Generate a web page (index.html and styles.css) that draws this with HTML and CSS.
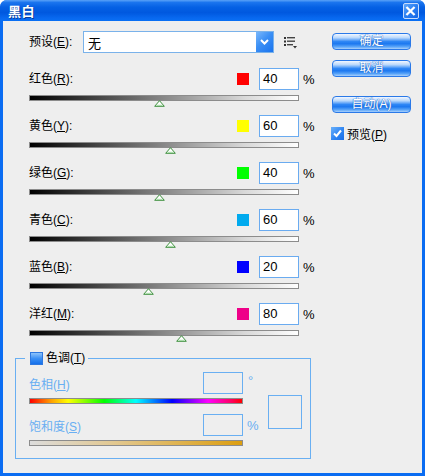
FILE: index.html
```html
<!DOCTYPE html>
<html>
<head>
<meta charset="utf-8">
<link rel="stylesheet" href="styles.css">
</head>
<body>
<div class="window">
  <div class="titlebar">
    <span class="title">黑白</span>
    <span class="close"><svg width="16" height="16" viewBox="0 0 16 16"><path d="M4.5 4.5 L11.5 11.5 M11.5 4.5 L4.5 11.5" stroke="#fff" stroke-width="2.4" stroke-linecap="square"/></svg></span>
  </div>
  <div class="client">
    <div class="main">
      <div class="preset-row">
        <span class="plabel">预设(<u>E</u>):</span>
        <div class="combo">
          <span class="combo-text">无</span>
          <span class="combo-btn"><svg width="17" height="20" viewBox="0 0 17 20"><path d="M5 8 L8.5 11.5 L12 8" stroke="#fff" stroke-width="2" fill="none"/></svg></span>
        </div>
        <svg class="menu-icon" width="14" height="12" viewBox="0 0 14 12">
          <rect x="0" y="0" width="2" height="2" fill="#333"/><rect x="3" y="0" width="8" height="1.4" fill="#444"/>
          <rect x="0" y="3.5" width="2" height="2" fill="#333"/><rect x="3" y="3.5" width="8" height="1.4" fill="#444"/>
          <rect x="0" y="7" width="2" height="2" fill="#333"/><rect x="3" y="7" width="6" height="1.4" fill="#444"/>
          <path d="M9 9 L13 9 L11 11.5 Z" fill="#333"/>
        </svg>
      </div>

      <div class="channel">
        <div class="ch-row"><span class="clabel">红色(<u>R</u>):</span><span class="swatch" style="background:#ff0000"></span><span class="num">40</span><span class="unit">%</span></div>
        <div class="slider"><span class="thumb" style="left:124px"><svg width="11" height="7" viewBox="0 0 11 7"><path d="M5.5 0.7 L10.3 6.3 L0.7 6.3 Z" fill="#fff" stroke="#3d8f3d" stroke-width="1"/><path d="M2.5 5.3 L8.5 5.3" stroke="#9fd89f" stroke-width="1"/></svg></span></div>
      </div>
      <div class="channel">
        <div class="ch-row"><span class="clabel">黄色(<u>Y</u>):</span><span class="swatch" style="background:#ffff00"></span><span class="num">60</span><span class="unit">%</span></div>
        <div class="slider"><span class="thumb" style="left:135px"><svg width="11" height="7" viewBox="0 0 11 7"><path d="M5.5 0.7 L10.3 6.3 L0.7 6.3 Z" fill="#fff" stroke="#3d8f3d" stroke-width="1"/><path d="M2.5 5.3 L8.5 5.3" stroke="#9fd89f" stroke-width="1"/></svg></span></div>
      </div>
      <div class="channel">
        <div class="ch-row"><span class="clabel">绿色(<u>G</u>):</span><span class="swatch" style="background:#00ff00"></span><span class="num">40</span><span class="unit">%</span></div>
        <div class="slider"><span class="thumb" style="left:124px"><svg width="11" height="7" viewBox="0 0 11 7"><path d="M5.5 0.7 L10.3 6.3 L0.7 6.3 Z" fill="#fff" stroke="#3d8f3d" stroke-width="1"/><path d="M2.5 5.3 L8.5 5.3" stroke="#9fd89f" stroke-width="1"/></svg></span></div>
      </div>
      <div class="channel">
        <div class="ch-row"><span class="clabel">青色(<u>C</u>):</span><span class="swatch" style="background:#00aaee"></span><span class="num">60</span><span class="unit">%</span></div>
        <div class="slider"><span class="thumb" style="left:135px"><svg width="11" height="7" viewBox="0 0 11 7"><path d="M5.5 0.7 L10.3 6.3 L0.7 6.3 Z" fill="#fff" stroke="#3d8f3d" stroke-width="1"/><path d="M2.5 5.3 L8.5 5.3" stroke="#9fd89f" stroke-width="1"/></svg></span></div>
      </div>
      <div class="channel">
        <div class="ch-row"><span class="clabel">蓝色(<u>B</u>):</span><span class="swatch" style="background:#0000ff"></span><span class="num">20</span><span class="unit">%</span></div>
        <div class="slider"><span class="thumb" style="left:113px"><svg width="11" height="7" viewBox="0 0 11 7"><path d="M5.5 0.7 L10.3 6.3 L0.7 6.3 Z" fill="#fff" stroke="#3d8f3d" stroke-width="1"/><path d="M2.5 5.3 L8.5 5.3" stroke="#9fd89f" stroke-width="1"/></svg></span></div>
      </div>
      <div class="channel">
        <div class="ch-row"><span class="clabel">洋红(<u>M</u>):</span><span class="swatch" style="background:#ee0088"></span><span class="num">80</span><span class="unit">%</span></div>
        <div class="slider"><span class="thumb" style="left:146px"><svg width="11" height="7" viewBox="0 0 11 7"><path d="M5.5 0.7 L10.3 6.3 L0.7 6.3 Z" fill="#fff" stroke="#3d8f3d" stroke-width="1"/><path d="M2.5 5.3 L8.5 5.3" stroke="#9fd89f" stroke-width="1"/></svg></span></div>
      </div>

      <fieldset class="tint">
        <legend class="tint-legend"><span class="tbox"></span><span>色调(<u>T</u>)</span></legend>
        <div class="tint-body">
          <div class="tint-left">
            <div class="t-row"><span class="tlabel">色相(<u>H</u>)</span><span class="tinput"></span><span class="tunit deg">°</span></div>
            <div class="hbar"></div>
            <div class="t-row second"><span class="tlabel">饱和度(<u>S</u>)</span><span class="tinput"></span><span class="tunit">%</span></div>
            <div class="sbar"></div>
          </div>
          <div class="tswatch"></div>
        </div>
      </fieldset>
    </div>

    <div class="side">
      <div class="btn">确定</div>
      <div class="btn b2">取消</div>
      <div class="btn b3">自动(A)</div>
      <div class="preview"><span class="cbox"><svg width="13" height="13" viewBox="0 0 13 13"><path d="M3 6.5 L5.5 9 L10 3.5" stroke="#fff" stroke-width="2" fill="none"/></svg></span><span>预览(<u>P</u>)</span></div>
    </div>
  </div>
</div>
</body>
</html>
```

FILE: styles.css
```css
* { box-sizing: border-box; }
html, body { margin: 0; padding: 0; background: #ffffff; }
body {
  font-family: "Liberation Sans", "Noto Sans CJK SC", sans-serif;
  font-size: 12px;
  color: #000;
}
u { text-decoration: underline; text-underline-offset: 1px; }

.window {
  width: 425px;
  height: 476px;
  background: #0a6cf2;
  border-radius: 7px 7px 0 0;
  display: flex;
  flex-direction: column;
  overflow: hidden;
}
.titlebar {
  height: 21px;
  flex: none;
  display: flex;
  align-items: center;
  justify-content: space-between;
  padding: 0 6px 0 8px;
  background: linear-gradient(to bottom, #5aa2f7 0%, #1a74ee 12%, #0560e4 35%, #0058df 60%, #0868ef 85%, #0a70f4 100%);
}
.title {
  color: #fff;
  font-weight: bold;
  font-size: 13px;
  font-family: "Noto Sans CJK SC", sans-serif;
  line-height: 20px;
  text-shadow: 1px 1px 0 #0a3c9a;
  letter-spacing: 0.5px;
}
.close {
  width: 16px;
  height: 16px;
  margin-top: 1px;
  border: 1px solid #c8dcfb;
  border-radius: 2px;
  background: linear-gradient(135deg, #5ea6fa 0%, #2b7ff2 50%, #1466e6 100%);
  display: flex;
}
.close svg { margin: -1px 0 0 -1px; }

.client {
  flex: 1;
  margin: 0 3px 3px 3px;
  background: #eeeeee;
  display: flex;
}
.main {
  width: 329px;
  padding: 10px 0 0 12px;
  flex: none;
}

.preset-row {
  margin-left: 14px;
  height: 22px;
  display: flex;
  align-items: center;
}
.plabel { width: 54px; line-height: 22px; }
.combo {
  width: 191px;
  height: 22px;
  border: 1px solid #7ab2ea;
  background: #fff;
  display: flex;
  align-items: center;
  justify-content: space-between;
}
.combo-text { padding-left: 4px; font-size: 13px; }
.combo-btn {
  width: 17px;
  height: 20px;
  background: linear-gradient(135deg, #7ab8fb 0%, #3b8ff5 45%, #1a74ee 100%);
  display: flex;
}
.menu-icon { margin-left: 10px; margin-top: 2px; }

.channel { margin-left: 14px; }
.preset-row + .channel { margin-top: 15px; }
.ch-row {
  height: 22px;
  display: flex;
  align-items: center;
}
.clabel { width: 208px; line-height: 22px; }
.swatch { width: 12px; height: 12px; margin-right: 10px; }
.num {
  width: 40px;
  height: 22px;
  border: 1px solid #6aabf0;
  background: #fff;
  padding-left: 3px;
  font-size: 13px;
  line-height: 20px;
}
.unit { margin-left: 4px; font-size: 13px; }
.slider {
  position: relative;
  width: 270px;
  height: 6px;
  margin: 5px 0 14px 0;
  border: 1px solid #8c8c8c;
  background: linear-gradient(to right, #000 0%, #7a7a7a 45%, #d8d8d8 80%, #ffffff 100%);
}
.thumb {
  position: absolute;
  top: 4px;
  width: 11px;
  height: 7px;
  display: block;
  line-height: 0;
}

.tint {
  margin: 3px 0 0 0;
  width: 296px;
  border: 1px solid #69aff2;
  padding: 6px 7px 12px 13px;
  min-width: 0;
}
.tint-legend {
  height: 16px;
  padding: 0 3px 0 5px;
  margin-left: -4px;
  display: flex;
  align-items: center;
  line-height: 16px;
}
.tbox {
  width: 13px;
  height: 13px;
  margin-right: 3px;
  border: 1px solid #2e78e0;
  background: linear-gradient(to bottom, #8ec4fb 0%, #3b90f5 50%, #1570ea 100%);
}
.tint-body { display: flex; }
.tint-left { width: 230px; flex: none; }
.t-row {
  height: 22px;
  display: flex;
  align-items: center;
}
.t-row.second { margin-top: 10px; }
.tlabel { width: 174px; flex: none; color: #69aff2; }
.tinput { width: 40px; height: 22px; flex: none; border: 1px solid #69aff2; }
.tunit { margin-left: 4px; color: #69aff2; font-size: 13px; white-space: nowrap; }
.tunit.deg { align-self: flex-start; margin-top: 1px; margin-left: 5px; }
.hbar {
  width: 214px;
  height: 6px;
  margin-top: 4px;
  border: 1px solid #8c8c8c;
  background: linear-gradient(to right, #ff0000 0%, #ffa000 10%, #ffff00 18%, #00ff00 35%, #00ffff 50%, #0000ff 67%, #ff00ff 84%, #ff0060 95%, #ff0000 100%);
}
.sbar {
  width: 214px;
  height: 6px;
  margin-top: 4px;
  border: 1px solid #8c8c8c;
  background: linear-gradient(to right, #dcdcdc 0%, #e2c890 40%, #dc9e10 100%);
}
.tswatch {
  width: 34px;
  height: 34px;
  flex: none;
  margin: 23px 0 0 9px;
  border: 1px solid #69aff2;
}

.side {
  padding-top: 12px;
  display: flex;
  flex-direction: column;
  align-items: flex-start;
}
.btn {
  width: 79px;
  height: 17px;
  border: 1px solid #2a79e8;
  border-radius: 4px;
  background: linear-gradient(to bottom, #f2f7ff 0%, #b9d8fc 25%, #2f87f5 50%, #1c78f0 65%, #5aa5f8 85%, #a9d0fc 100%);
  color: #fff;
  text-align: center;
  line-height: 15px;
  font-size: 12px;
  text-shadow: 0 0 1px #1b5fc4, 0 0 1px #1b5fc4;
}
.b2 { margin-top: 10px; }
.b3 { margin-top: 19px; }
.preview {
  margin-top: 14px;
  margin-left: -1px;
  display: flex;
  align-items: center;
  height: 13px;
}
.cbox {
  width: 13px;
  height: 13px;
  margin-right: 3px;
  background: linear-gradient(135deg, #6ab0fa 0%, #2b82f2 60%, #1a6ee6 100%);
  display: flex;
}
```
